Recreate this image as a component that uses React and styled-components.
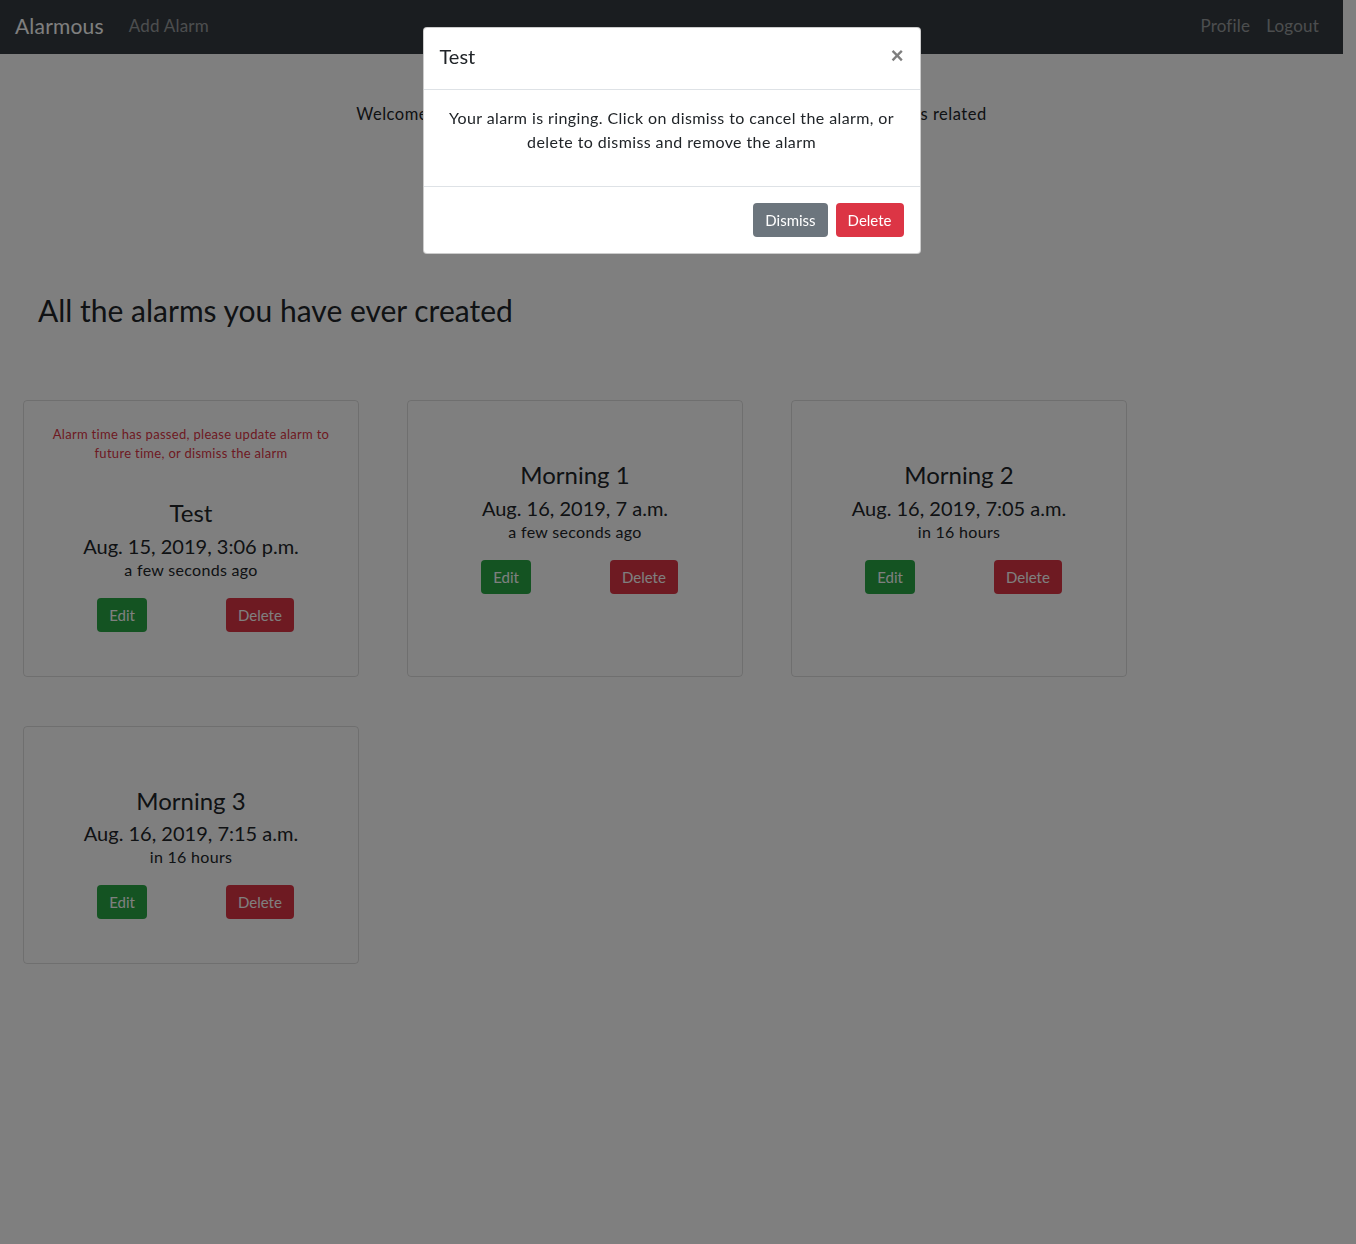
import styled, { createGlobalStyle } from "styled-components";

const GlobalStyle = createGlobalStyle`
  * { box-sizing: border-box; }
  body {
    margin: 0;
    padding-right: 13px;
    background: #fff;
    color: #212529;
    font-family: "Lato", "Open Sans", sans-serif;
    font-size: 16px;
    line-height: 1.5;
  }
`;

const alarms = [
  {
    id: 1,
    name: "Test",
    time: "Aug. 15, 2019, 3:06 p.m.",
    relative: "a few seconds ago",
    passed: true,
  },
  {
    id: 2,
    name: "Morning 1",
    time: "Aug. 16, 2019, 7 a.m.",
    relative: "a few seconds ago",
  },
  {
    id: 3,
    name: "Morning 2",
    time: "Aug. 16, 2019, 7:05 a.m.",
    relative: "in 16 hours",
  },
  {
    id: 4,
    name: "Morning 3",
    time: "Aug. 16, 2019, 7:15 a.m.",
    relative: "in 16 hours",
  },
];

const Nav = styled.nav`
  display: flex;
  align-items: center;
  height: 54px;
  padding: 0 16px 2px 15px;
  background: #343a40;
`;

const Brand = styled.a`
  font-size: 21px;
  letter-spacing: 0.2px;
  color: #fff;
  margin-right: 17px;
  text-decoration: none;
`;

const NavLink = styled.a`
  padding: 0 8px;
  font-size: 17px;
  letter-spacing: 0.2px;
  color: rgba(255, 255, 255, 0.5);
  text-decoration: none;
`;

const NavRight = styled.div`
  margin-left: auto;
  display: flex;
`;

const Main = styled.main`
  padding: 0 0 200px;
`;

const Welcome = styled.p`
  margin: 48px auto 0;
  text-align: center;
  font-size: 16.5px;
  letter-spacing: 0.5px;
`;

const Heading = styled.h2`
  margin: 165px 0 0 38px;
  font-size: 30px;
  font-weight: 400;
  line-height: 1.2;
`;

const Cards = styled.div`
  display: flex;
  flex-wrap: wrap;
  width: 1152px;
  margin-top: 72px;
  padding-left: 23px;
  gap: 49px 48px;
`;

const Card = styled.div`
  width: 336px;
  border: 1px solid rgba(0, 0, 0, 0.125);
  border-radius: 4px;
  padding: 24px 24px 44px;
  text-align: center;
`;

const Warning = styled.p`
  margin: 0 0 36px;
  font-size: 13px;
  line-height: 19px;
  letter-spacing: 0.3px;
  color: #dc3545;
`;

const Title = styled.h3`
  margin: 0 0 6px;
  font-size: 24px;
  font-weight: 400;
  line-height: 28.8px;
`;

const When = styled.div`
  font-size: 20px;
  line-height: 24px;
`;

const Relative = styled.div`
  font-size: 16px;
  line-height: 24px;
  letter-spacing: 0.3px;
`;

const Actions = styled.div`
  display: flex;
  justify-content: center;
  gap: 79px;
  margin-top: 16px;
  padding-left: 9px;
`;

const colors = {
  success: "#28a745",
  danger: "#dc3545",
  secondary: "#6c757d",
};

const Button = styled.button`
  height: 34px;
  padding: 0 12px;
  border: none;
  border-radius: 4px;
  font-family: inherit;
  font-size: 15px;
  color: #fff;
  background: ${(p) => colors[p.$variant]};
`;

const Backdrop = styled.div`
  position: fixed;
  inset: 0;
  background: rgba(0, 0, 0, 0.5);
`;

const ModalWrap = styled.div`
  position: fixed;
  top: 0;
  left: 0;
  right: 13px;
  display: flex;
  justify-content: center;
  padding-top: 27px;
`;

const Dialog = styled.div`
  width: 498px;
  background: #fff;
  border-radius: 4px;
  border: 1px solid rgba(0, 0, 0, 0.2);
`;

const ModalHeader = styled.div`
  display: flex;
  align-items: center;
  justify-content: space-between;
  padding: 13px 16px 18px;
  border-bottom: 1px solid #dee2e6;
`;

const ModalTitle = styled.h5`
  margin: 0;
  font-size: 20px;
  font-weight: 400;
  line-height: 30px;
`;

const Close = styled.button`
  border: none;
  background: none;
  padding: 0;
  font-size: 22px;
  font-weight: 700;
  line-height: 1;
  color: #000;
  opacity: 0.5;
`;

const ModalBody = styled.div`
  padding: 16px;
  text-align: center;
  letter-spacing: 0.4px;

  p {
    margin: 0 0 16px;
  }
`;

const ModalFooter = styled.div`
  display: flex;
  justify-content: flex-end;
  gap: 8px;
  padding: 16px;
  border-top: 1px solid #dee2e6;
`;

function AlarmCard({ alarm }) {
  return (
    <Card>
      <Warning>
        {alarm.passed &&
          "Alarm time has passed, please update alarm to future time, or dismiss the alarm"}
      </Warning>
      <Title>{alarm.name}</Title>
      <When>{alarm.time}</When>
      <Relative>{alarm.relative}</Relative>
      <Actions>
        <Button $variant="success">Edit</Button>
        <Button $variant="danger">Delete</Button>
      </Actions>
    </Card>
  );
}

export default function App() {
  return (
    <>
      <GlobalStyle />
      <Nav>
        <Brand href="#">Alarmous</Brand>
        <NavLink href="#">Add Alarm</NavLink>
        <NavRight>
          <NavLink href="#">Profile</NavLink>
          <NavLink href="#">Logout</NavLink>
        </NavRight>
      </Nav>
      <Main>
        <Welcome>
          Welcome to Alarmous, the place to manage every alarm and the reminders related
        </Welcome>
        <Heading>All the alarms you have ever created</Heading>
        <Cards>
          {alarms.map((a) => (
            <AlarmCard key={a.id} alarm={a} />
          ))}
        </Cards>
      </Main>
      <Backdrop />
      <ModalWrap>
        <Dialog>
          <ModalHeader>
            <ModalTitle>Test</ModalTitle>
            <Close>×</Close>
          </ModalHeader>
          <ModalBody>
            <p>
              Your alarm is ringing. Click on dismiss to cancel the alarm, or
              delete to dismiss and remove the alarm
            </p>
          </ModalBody>
          <ModalFooter>
            <Button $variant="secondary">Dismiss</Button>
            <Button $variant="danger">Delete</Button>
          </ModalFooter>
        </Dialog>
      </ModalWrap>
    </>
  );
}
